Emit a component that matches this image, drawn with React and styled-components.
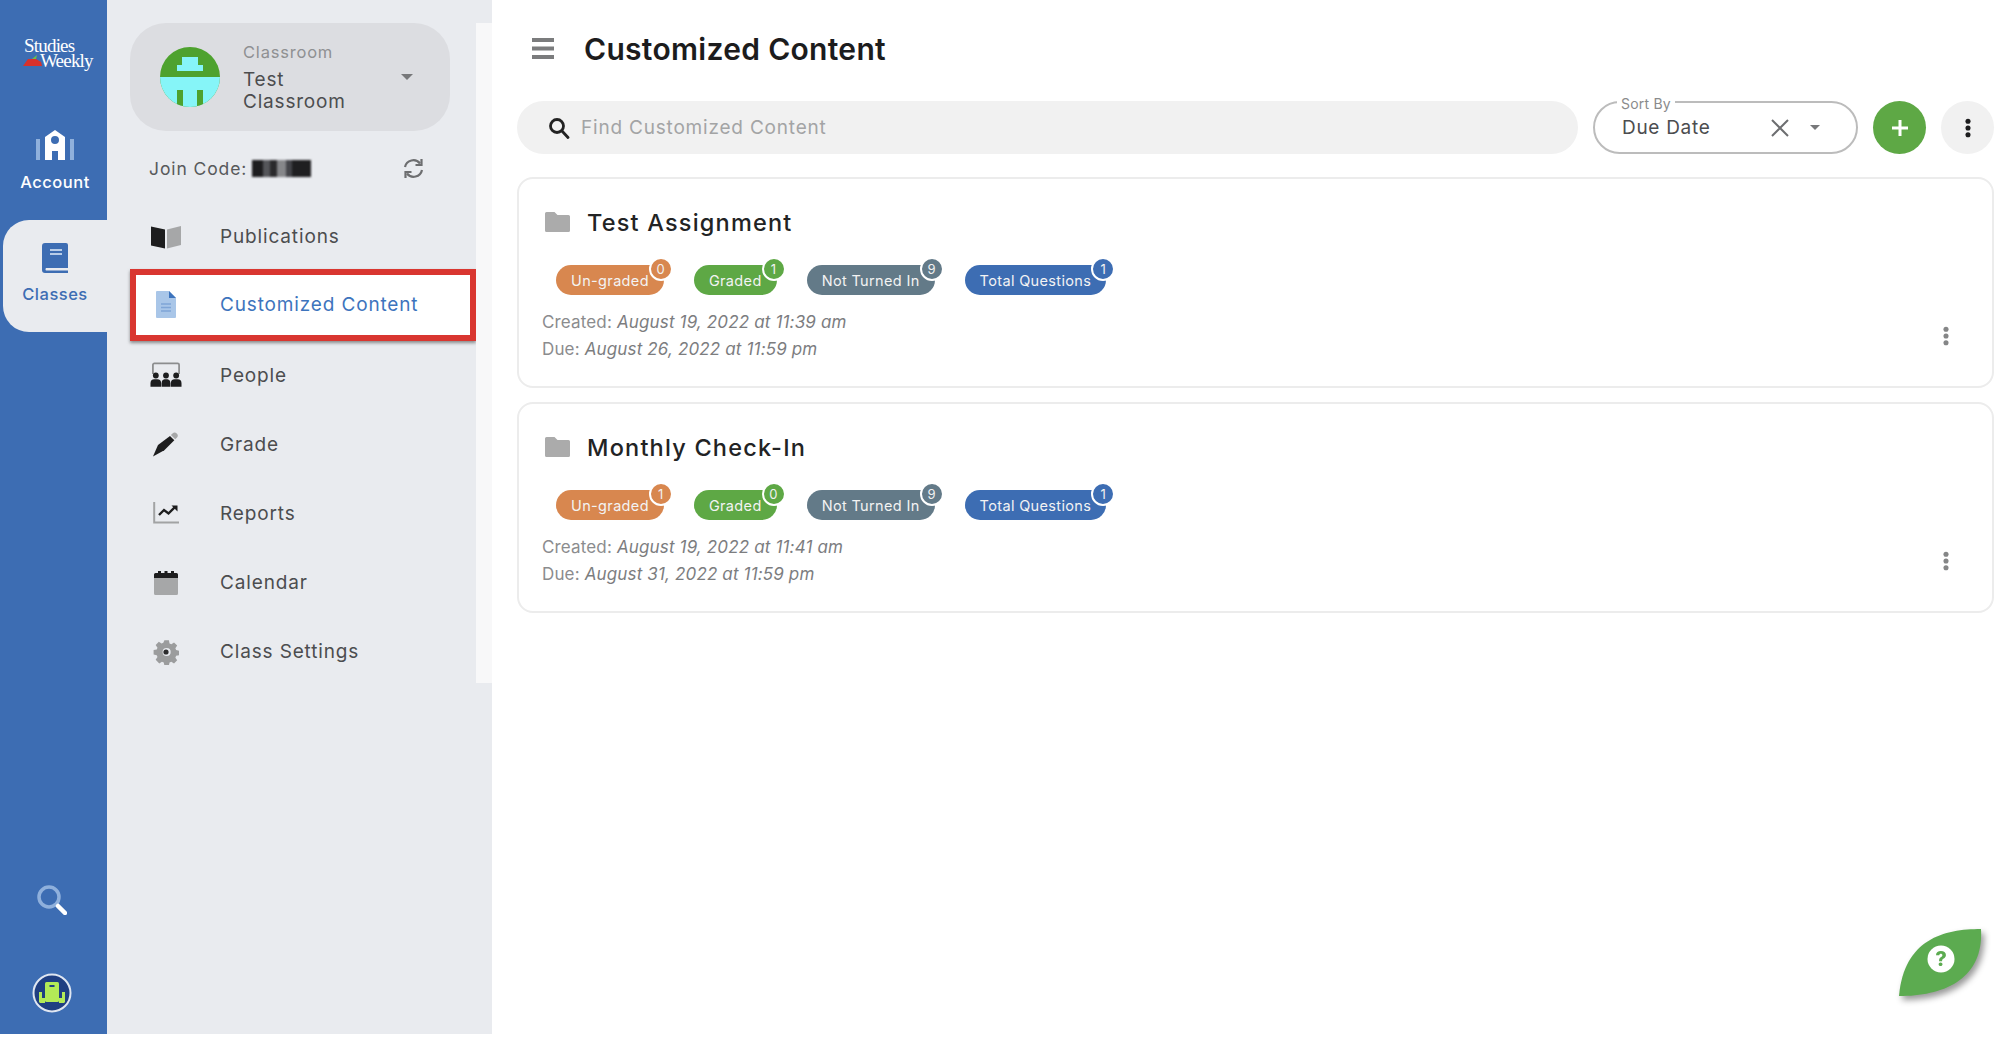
import styled, { createGlobalStyle } from "styled-components";

const GlobalStyle = createGlobalStyle`
  html, body {
    margin: 0;
    padding: 0;
    background: #fff;
    font-family: "Inter", "Open Sans", sans-serif;
  }
  * { box-sizing: border-box; }
`;

const Page = styled.div`
  display: flex;
  width: 2010px;
  height: 1034px;
  overflow: hidden;
`;

/* left blue rail */
const Rail = styled.nav`
  width: 107px;
  flex-shrink: 0;
  display: flex;
  flex-direction: column;
  align-items: flex-end;
  background: #3d6db3;
`;

const Logo = styled.div`
  width: 107px;
  height: 120px;
  padding: 38px 0 0 24px;
  color: #fff;
  font-family: "Liberation Serif", serif;
  font-size: 19px;
  line-height: 15px;
  letter-spacing: -0.8px;
  position: relative;
  span { display: block; }
  span + span { padding-left: 16px; }
`;

const Apple = styled.svg`
  position: absolute;
  left: 23px;
  top: 54px;
`;

const RailItem = styled.div`
  display: flex;
  flex-direction: column;
  align-items: center;
  width: 104px;
  height: ${(p) => (p.active ? "112px" : "100px")};
  padding-top: ${(p) => (p.active ? "23px" : "10px")};
  gap: ${(p) => (p.active ? "11px" : "12px")};
  color: ${(p) => (p.active ? "#3d6db3" : "#fff")};
  background: ${(p) => (p.active ? "#e9ebef" : "transparent")};
  border-radius: ${(p) => (p.active ? "26px 0 0 26px" : "0")};
  font-size: 16.5px;
  font-weight: 500;
  letter-spacing: 0.5px;
`;

const RailBottom = styled.div`
  margin-top: auto;
  width: 107px;
  display: flex;
  flex-direction: column;
  align-items: center;
  gap: 58px;
  padding: 0 4px 21px 0;
`;

/* classroom panel */
const Panel = styled.aside`
  width: 385px;
  flex-shrink: 0;
  display: flex;
  padding-top: 23px;
  background: #e9ebef;
`;

const PanelBody = styled.div`
  width: 369px;
  padding-left: 23px;
`;

const ScrollTrack = styled.div`
  width: 16px;
  height: 660px;
  background: #f8f8f9;
`;

const ClassCard = styled.div`
  width: 320px;
  height: 108px;
  display: flex;
  align-items: center;
  padding: 0 37px 0 30px;
  gap: 23px;
  background: #dcdde1;
  border-radius: 36px;
`;

const ClassText = styled.div`
  flex: 1;
  display: flex;
  flex-direction: column;
`;

const ClassLabel = styled.div`
  font-size: 16.5px;
  line-height: 20px;
  letter-spacing: 0.8px;
  margin-bottom: 7px;
  color: #8f9092;
`;

const ClassName = styled.div`
  font-size: 19px;
  line-height: 22px;
  letter-spacing: 0.8px;
  color: #4c4d4f;
`;

const Caret = styled.div`
  width: 0;
  height: 0;
  border-left: ${(p) => p.size}px solid transparent;
  border-right: ${(p) => p.size}px solid transparent;
  border-top: ${(p) => p.size}px solid #77787a;
`;

const JoinRow = styled.div`
  height: 30px;
  margin: 22px 52px 0 19px;
  display: flex;
  align-items: center;
  gap: 5px;
  font-size: 17.5px;
  letter-spacing: 0.9px;
  color: #58595b;
`;

const Blurred = styled.div`
  width: 59px;
  height: 17px;
  margin-right: auto;
  filter: blur(1px);
  background:
    linear-gradient(90deg, #1d1d1f 0 18%, #55565a 18% 30%, #2a2a2c 30% 42%, #86878a 42% 58%, #44454a 58% 68%, #1f1f21 68% 100%);
`;

const NavList = styled.div`
  margin-top: 18px;
  width: 346px;
  display: flex;
  flex-direction: column;
`;

const NavItem = styled.div`
  display: flex;
  align-items: center;
  height: ${(p) => (p.active ? "72px" : "69.2px")};
  margin: ${(p) => (p.active ? "-1.4px 0" : "0")};
  font-size: 19px;
  letter-spacing: 0.85px;
  color: ${(p) => (p.active ? "#3d74bd" : "#4c4d4f")};
  background: ${(p) => (p.active ? "#fff" : "transparent")};
  border: ${(p) => (p.active ? "6px solid #d93630" : "none")};
  box-shadow: ${(p) => (p.active ? "0 2px 3px rgba(60,60,60,.55)" : "none")};
  padding: ${(p) => (p.active ? "0 0 0 14px" : "2px 0 0 20px")};
`;

const NavIcon = styled.div`
  width: 32px;
  height: 32px;
  margin-right: 38px;
  display: flex;
  align-items: center;
  justify-content: center;
`;

/* main content */
const Main = styled.main`
  flex: 1;
  display: flex;
  flex-direction: column;
  padding: 0 17px 0 25px;
  background: #fff;
  border-radius: 18px 0 0 0;
  position: relative;
`;

const Header = styled.header`
  height: 101px;
  display: flex;
  align-items: center;
  padding: 0 0 4px 15px;
  gap: 30px;
`;

const Title = styled.h1`
  margin: 0;
  font-size: 30px;
  font-weight: 600;
  letter-spacing: 0.3px;
  color: #1c1c1d;
`;

const Toolbar = styled.div`
  display: flex;
  align-items: center;
  height: 53px;
  gap: 15px;
`;

const Search = styled.div`
  width: 1061px;
  height: 53px;
  display: flex;
  align-items: center;
  gap: 11px;
  padding-left: 31px;
  background: #f1f1f1;
  border-radius: 27px;
  color: #a3a4a5;
  font-size: 19px;
  letter-spacing: 0.8px;
`;

const SortBox = styled.div`
  position: relative;
  width: 265px;
  height: 53px;
  display: flex;
  align-items: center;
  padding: 0 36px 0 27px;
  border: 2px solid #bcbcbc;
  border-radius: 27px;
  font-size: 19px;
  letter-spacing: 0.7px;
  color: #4c4d4f;
`;

const SortLegend = styled.span`
  position: absolute;
  top: -7px;
  left: 22px;
  padding: 0 4px;
  background: #fff;
  font-size: 14px;
  line-height: 16px;
  letter-spacing: 0.2px;
  color: #8a8b8c;
`;

const SortValue = styled.span`
  flex: 1;
`;

const RoundButton = styled.div`
  width: 53px;
  height: 53px;
  border-radius: 50%;
  display: flex;
  align-items: center;
  justify-content: center;
  background: ${(p) => p.bg};
`;

const CardList = styled.div`
  margin-top: 23px;
  display: flex;
  flex-direction: column;
  gap: 14px;
`;

const Card = styled.section`
  height: 211px;
  display: flex;
  padding: 28px 0 0 23px;
  border: 2px solid #ececec;
  border-radius: 16px;
`;

const CardBody = styled.div`
  flex: 1;
`;

const CardTitle = styled.div`
  height: 30px;
  padding-left: 3px;
  display: flex;
  align-items: center;
  gap: 17px;
  font-size: 23.5px;
  font-weight: 500;
  letter-spacing: 1.2px;
  color: #222324;
`;

const Pills = styled.div`
  margin: 28px 0 0 14px;
  display: flex;
  gap: 30px;
`;

const Pill = styled.div`
  position: relative;
  height: 30px;
  padding: 0 15px;
  display: flex;
  align-items: center;
  border-radius: 15px;
  font-size: 14.5px;
  letter-spacing: 0.35px;
  color: #f3f3f3;
  background: ${(p) => p.bg};
`;

const Count = styled.span`
  position: absolute;
  top: -8px;
  right: -9px;
  width: 24px;
  height: 24px;
  display: flex;
  align-items: center;
  justify-content: center;
  border: 2px solid #fff;
  border-radius: 50%;
  font-size: 13px;
  color: #f1f1f1;
  background: ${(p) => p.bg};
`;

const Meta = styled.div`
  margin-top: 14px;
  font-size: 17px;
  line-height: 27px;
  letter-spacing: 0.15px;
  color: #8b8c8e;
  em { color: #7c7d7f; }
`;

const CardMenu = styled.div`
  align-self: flex-end;
  margin: 0 43px 36px 0;
`;

const Leaf = styled.svg`
  position: absolute;
  right: 28px;
  bottom: 37px;
  filter: drop-shadow(3px 4px 3px rgba(0, 0, 0, 0.4));
`;

const Dots = ({ color, size = 3 }) => (
  <svg width={size * 2} height={size * 6 + 2} viewBox="0 0 8 26" fill={color}>
    <circle cx="4" cy="4" r="3.4" />
    <circle cx="4" cy="13" r="3.4" />
    <circle cx="4" cy="22" r="3.4" />
  </svg>
);

const FolderIcon = () => (
  <svg width="25" height="20" viewBox="0 0 25 20" fill="#ababab">
    <path d="M1.5 0h8l3 3h11A1.5 1.5 0 0 1 25 4.5v14a1.5 1.5 0 0 1-1.5 1.5h-22A1.5 1.5 0 0 1 0 18.500v-17A1.500 1.500 0 0 1 1.500 0z" />
  </svg>
);

const SearchIcon = () => (
  <svg width="22" height="22" viewBox="0 0 22 22" fill="none" stroke="#222" strokeWidth="2.800">
    <circle cx="9" cy="9" r="6.500" />
    <path d="M14 14l6 6.500" strokeLinecap="round" />
  </svg>
);

const BookOpenIcon = () => (
  <svg width="32" height="24" viewBox="0 0 32 24">
    <path d="M1 1.500l14 3v19l-14-3z" fill="#1d1d1e" />
    <path d="M17 4.500l14-3.500v19l-14 3.500z" fill="#a6a7a8" />
  </svg>
);

const DocIcon = () => (
  <svg width="20" height="27" viewBox="0 0 20 27">
    <path d="M1 0h12l7 7v19a1 1 0 0 1-1 1H1a1 1 0 0 1-1-1V1a1 1 0 0 1 1-1z" fill="#a9c6e8" />
    <path d="M13 0l7 7h-7z" fill="#3d74bd" />
    <path d="M5 13h10M5 16.500h10M5 20h10" stroke="#7fa5d6" strokeWidth="1.500" />
  </svg>
);

const PeopleIcon = () => (
  <svg width="33" height="26" viewBox="0 0 33 26">
    <path d="M3 12V2.500A1.500 1.500 0 0 1 4.500 1h24A1.500 1.500 0 0 1 30 2.500V12" fill="none" stroke="#8c8d8e" strokeWidth="1.800" />
    <g fill="#1d1d1e">
      <circle cx="6" cy="13.500" r="3" />
      <circle cx="16.500" cy="13.500" r="3" />
      <circle cx="27" cy="13.500" r="3" />
      <path d="M0.500 25v-3.500A4 4 0 0 1 4.500 17.500h3a4 4 0 0 1 4 4V25zM12 25v-3.500a4 4 0 0 1 3-4h3a4 4 0 0 1 3 4V25zM21.500 25v-3.500a4 4 0 0 1 4-4h3a4 4 0 0 1 4 4V25z" />
    </g>
  </svg>
);

const PenIcon = () => (
  <svg width="28" height="26" viewBox="0 0 28 26">
    <path d="M20.500 2.500a3 3 0 0 1 4.300 4.200l-1.600 1.600-4.300-4.200z" fill="#a6a7a8" />
    <path d="M18 5l4.300 4.300-10 10L1 25.500l5-11.500z" fill="#1d1d1e" />
  </svg>
);

const ChartIcon = () => (
  <svg width="27" height="22" viewBox="0 0 27 22" fill="none">
    <path d="M1.200 0v20.500H26" stroke="#a2a3a4" strokeWidth="2" />
    <path d="M6 13l5-5 4.500 3.500L22 5" stroke="#1d1d1e" strokeWidth="2.400" />
    <path d="M18.500 3.500h6v6z" fill="#1d1d1e" />
  </svg>
);

const CalendarIcon = () => (
  <svg width="24" height="25" viewBox="0 0 24 25">
    <path d="M0 8h24v15.500a1.500 1.500 0 0 1-1.500 1.500h-21A1.500 1.500 0 0 1 0 23.500z" fill="#a6a7a8" />
    <path d="M0 8V4.500A1.500 1.500 0 0 1 1.500 3H4V1h3v2h3.500V1h3v2H17V1h3v2h2.500A1.500 1.500 0 0 1 24 4.500V8z" fill="#1d1d1e" />
  </svg>
);

const GearIcon = () => (
  <svg width="26" height="26" viewBox="0 0 26 26">
    <path
      fill="#9b9c9d"
      fillRule="evenodd"
      d="M10.500 0h5l.7 3.500 2 .8 3-2 3.500 3.500-2 3 .8 2 3.500.7v5l-3.500.7-.8 2 2 3-3.500 3.500-3-2-2 .8-.7 3.500h-5l-.7-3.500-2-.8-3 2L.8 21.500l2-3-.8-2L-1.500 15.800v-5L2 10.100l.8-2-2-3L4.300 1.600l3 2 2-.8zM13 8.500a4.500 4.500 0 1 0 0 9 4.500 4.500 0 0 0 0-9z"
      transform="translate(1.500 0) scale(.9) translate(.5 1.500)"
    />
    <circle cx="13" cy="13" r="2.600" fill="#2b2b2c" />
  </svg>
);

const RefreshIcon = () => (
  <svg width="21" height="21" viewBox="0 0 21 21" fill="none" stroke="#6d6e70" strokeWidth="2.200">
    <path d="M2 9a8.500 8.500 0 0 1 15-3.500" />
    <path d="M19 12a8.500 8.500 0 0 1-15 3.500" />
    <path d="M18.500 1v6h-6M2.500 20v-6h6" />
  </svg>
);

const ClassroomAvatar = () => (
  <svg width="60" height="60" viewBox="0 0 60 60" style={{ flexShrink: 0 }}>
    <clipPath id="avatarClip">
      <circle cx="30" cy="30" r="30" />
    </clipPath>
    <g clipPath="url(#avatarClip)">
      <rect width="60" height="60" fill="#4ea22e" />
      <rect y="30" width="60" height="30" fill="#86f5f8" />
      <rect x="22" y="10" width="16" height="8" fill="#86f5f8" />
      <rect x="17" y="18" width="26" height="6" fill="#86f5f8" />
      <rect x="17" y="43" width="6" height="17" fill="#4ea22e" />
      <rect x="37" y="43" width="6" height="17" fill="#4ea22e" />
    </g>
  </svg>
);

const pills = (counts) => [
  { label: "Un-graded", bg: "#d8874f", count: counts[0] },
  { label: "Graded", bg: "#5ea845", count: counts[1] },
  { label: "Not Turned In", bg: "#637a88", count: counts[2] },
  { label: "Total Questions", bg: "#3d6db3", count: counts[3] },
];

const assignments = [
  {
    title: "Test Assignment",
    created: "August 19, 2022 at 11:39 am",
    due: "August 26, 2022 at 11:59 pm",
    counts: [0, 1, 9, 1],
  },
  {
    title: "Monthly Check-In",
    created: "August 19, 2022 at 11:41 am",
    due: "August 31, 2022 at 11:59 pm",
    counts: [1, 0, 9, 1],
  },
];

const navItems = [
  { label: "Publications", icon: <BookOpenIcon /> },
  { label: "Customized Content", icon: <DocIcon />, active: true },
  { label: "People", icon: <PeopleIcon /> },
  { label: "Grade", icon: <PenIcon /> },
  { label: "Reports", icon: <ChartIcon /> },
  { label: "Calendar", icon: <CalendarIcon /> },
  { label: "Class Settings", icon: <GearIcon /> },
];

const App = () => {
  return (
    <Page>
      <GlobalStyle />
      <Rail>
        <Logo>
          <span>Studies</span>
          <span>Weekly</span>
          <Apple width="20" height="12" viewBox="0 0 20 12">
            <path d="M0 12l5-7h8l5 3 1 4z" fill="#d8312b" />
            <path d="M9 5l5-4-1 4z" fill="#6fbf4a" />
          </Apple>
        </Logo>
        <RailItem>
          <svg width="38" height="30" viewBox="0 0 38 30">
            <path d="M0 9h4v21H0zM34 9h4v21h-4z" fill="#8fb0dc" />
            <path
              fill="#fff"
              fillRule="evenodd"
              d="M19 0l10 7v23h-7v-9h-6v9H9V7zM19 6a4 4 0 1 0 0 8 4 4 0 0 0 0-8z"
            />
            <circle cx="19" cy="10" r="3" fill="#3d6db3" />
          </svg>
          Account
        </RailItem>
        <RailItem active>
          <svg width="26" height="30" viewBox="0 0 26 30">
            <path d="M3 0h21a2 2 0 0 1 2 2v23H4a2 2 0 0 0 0 2.500h22V30H3a3 3 0 0 1-3-3V3a3 3 0 0 1 3-3z" fill="#3d6db3" />
            <path d="M8 7h12M8 11h12" stroke="#b8cde8" strokeWidth="2" />
          </svg>
          Classes
        </RailItem>
        <RailBottom>
          <svg width="30" height="30" viewBox="0 0 30 30" fill="none">
            <circle cx="12" cy="12" r="10" stroke="#8fb0dc" strokeWidth="3.500" />
            <path d="M21 21l7 7" stroke="#fff" strokeWidth="4.500" strokeLinecap="round" />
          </svg>
          <svg width="40" height="40" viewBox="0 0 40 40">
            <circle cx="20" cy="20" r="18.500" fill="#1f3f82" stroke="#dfe6f1" strokeWidth="2" />
            <rect x="13" y="9" width="14" height="20" rx="1.500" fill="#b3ea57" />
            <rect x="17.500" y="12" width="5" height="2" fill="#1f3f82" />
            <path d="M7 19h3v6h3v5H8l-1-1zM33 19h-3v6h-3v5h5l1-1z" fill="#b3ea57" />
          </svg>
        </RailBottom>
      </Rail>

      <Panel>
        <PanelBody>
          <ClassCard>
            <ClassroomAvatar />
            <ClassText>
              <ClassLabel>Classroom</ClassLabel>
              <ClassName>
                Test
                <br />
                Classroom
              </ClassName>
            </ClassText>
            <Caret size={6} />
          </ClassCard>
          <JoinRow>
            Join Code:
            <Blurred />
            <RefreshIcon />
          </JoinRow>
          <NavList>
            {navItems.map((item) => (
              <NavItem key={item.label} active={item.active}>
                <NavIcon>{item.icon}</NavIcon>
                {item.label}
              </NavItem>
            ))}
          </NavList>
        </PanelBody>
        <ScrollTrack />
      </Panel>

      <Main>
        <Header>
          <svg width="22" height="21" viewBox="0 0 22 21" fill="#7b7c7d">
            <rect width="22" height="4" />
            <rect y="8.500" width="22" height="4" />
            <rect y="17" width="22" height="4" />
          </svg>
          <Title>Customized Content</Title>
        </Header>
        <Toolbar>
          <Search>
            <SearchIcon />
            Find Customized Content
          </Search>
          <SortBox>
            <SortLegend>Sort By</SortLegend>
            <SortValue>Due Date</SortValue>
            <svg width="18" height="18" viewBox="0 0 18 18" stroke="#6d6e70" strokeWidth="2" style={{ marginRight: 21 }}>
              <path d="M1 1l16 16M17 1L1 17" />
            </svg>
            <Caret size={5.500} />
          </SortBox>
          <RoundButton bg="#5ea845">
            <svg width="16" height="16" viewBox="0 0 16 16" stroke="#fff" strokeWidth="3">
              <path d="M8 0v16M0 8h16" />
            </svg>
          </RoundButton>
          <RoundButton bg="#f1f1f1">
            <Dots color="#1d1d1e" />
          </RoundButton>
        </Toolbar>
        <CardList>
          {assignments.map((a) => (
            <Card key={a.title}>
              <CardBody>
                <CardTitle>
                  <FolderIcon />
                  {a.title}
                </CardTitle>
                <Pills>
                  {pills(a.counts).map((p) => (
                    <Pill key={p.label} bg={p.bg}>
                      {p.label}
                      <Count bg={p.bg}>{p.count}</Count>
                    </Pill>
                  ))}
                </Pills>
                <Meta>
                  <div>
                    Created: <em>{a.created}</em>
                  </div>
                  <div>
                    Due: <em>{a.due}</em>
                  </div>
                </Meta>
              </CardBody>
              <CardMenu>
                <Dots color="#858687" />
              </CardMenu>
            </Card>
          ))}
        </CardList>
        <Leaf width="84" height="68" viewBox="0 0 84 68">
          <path d="M82 0C45 0 5 10 0 67C45 67 85 50 82 0z" fill="#5cab50" />
          <circle cx="42" cy="30" r="13.500" fill="#fff" />
          <text x="42" y="37" textAnchor="middle" fontSize="20" fontWeight="800" fill="#5cab50" fontFamily="Inter, sans-serif">?</text>
        </Leaf>
      </Main>
    </Page>
  );
};

export default App;
